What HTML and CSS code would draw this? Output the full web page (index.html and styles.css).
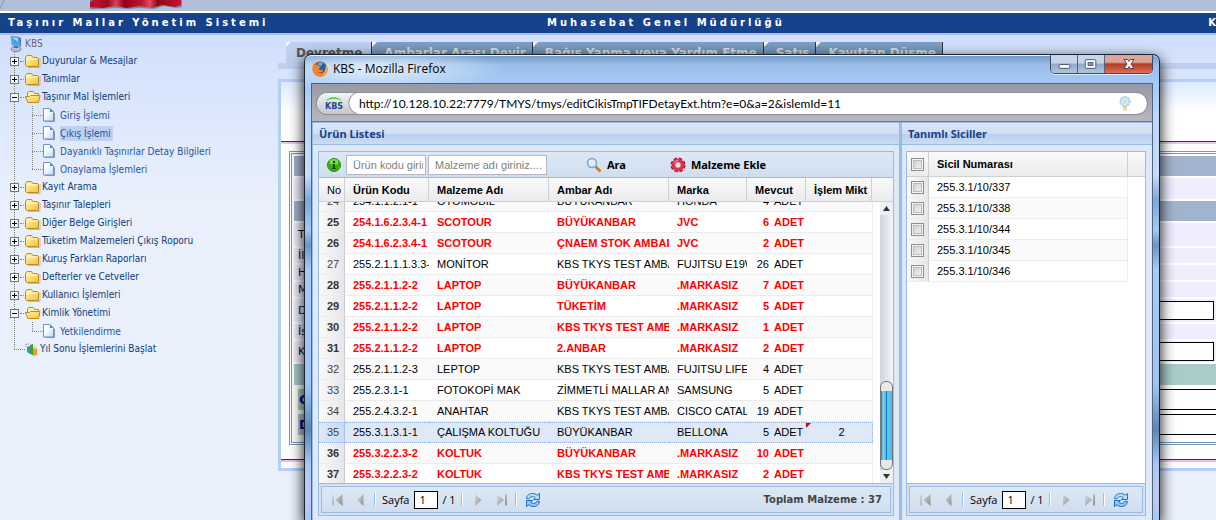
FILE: index.html
```html
<!DOCTYPE html>
<html lang="tr">
<head>
<meta charset="utf-8">
<title>Taşınır Mallar Yönetim Sistemi</title>
<link rel="stylesheet" href="styles.css">
</head>
<body>
<svg class="defs" aria-hidden="true">
  <defs>
    <linearGradient id="gold" x1="0" y1="0" x2="1" y2="1"><stop offset="0" stop-color="#fff8b0"/><stop offset="1" stop-color="#f3bf3c"/></linearGradient>
    <linearGradient id="paper" x1="0" y1="0" x2="1" y2="1"><stop offset="0.3" stop-color="#fff"/><stop offset="1" stop-color="#bcd8f8"/></linearGradient>
    <linearGradient id="grey" x1="0" y1="0" x2="1" y2="1"><stop offset="0" stop-color="#dcdcdc"/><stop offset="1" stop-color="#8c8c8c"/></linearGradient>
    <linearGradient id="flag" x1="0" x2="1"><stop offset="0" stop-color="#7c0617"/><stop offset=".12" stop-color="#c0112d"/><stop offset=".25" stop-color="#a00a20"/><stop offset=".34" stop-color="#df3d55"/><stop offset=".42" stop-color="#8b0619"/><stop offset=".6" stop-color="#c3142f"/><stop offset=".68" stop-color="#e04c60"/><stop offset=".76" stop-color="#8e081b"/><stop offset="1" stop-color="#c61431"/></linearGradient>
    <symbol id="folder" viewBox="0 0 16 14"><path d="M3 13.5h12V4" fill="none" stroke="#9a8a60" opacity=".5"/><path d="M.5 11.500V3.500L2 1.500h4.500L8 3.500h4.500l1 1v8H1.500z" fill="url(#gold)" stroke="#c08a1c"/><path d="M1.500 5h11" stroke="#fffbd8"/></symbol>
    <symbol id="folder-open" viewBox="0 0 16 14"><path d="M2.500 12V2.500L4 1.500h4l1.500 2h4V7" fill="#fff1a8" stroke="#c08a1c"/><path d="M.5 6.500h4l1-1h9.500l-1.500 7H3z" fill="url(#gold)" stroke="#c08a1c"/></symbol>
    <symbol id="page" viewBox="0 0 12 14"><path d="M2 13.500h9.500V5" fill="none" stroke="#8795ad"/><path d="M.5 .5h6.500l3.500 3.500v9H.5z" fill="url(#paper)" stroke="#6d93cf"/><path d="M7 .5v3.500h3.500z" fill="#5680c8"/></symbol>
    <symbol id="first" viewBox="0 0 12 12"><path d="M0 .5h2v11H0zM10.500 0v12L3.500 6z" fill="url(#grey)"/></symbol>
    <symbol id="prev" viewBox="0 0 12 12"><path d="M7.500 0v12L1 6z" fill="url(#grey)"/></symbol>
    <symbol id="next" viewBox="0 0 12 12"><path d="M2 0v12l6.500-6z" fill="url(#grey)"/></symbol>
    <symbol id="last" viewBox="0 0 12 12"><path d="M8 .5h2v11H8zM0 0v12l7-6z" fill="url(#grey)"/></symbol>
    <symbol id="refresh" viewBox="0 0 16 16"><path d="M1.500 6.500C2 3 4.500 1.500 7.500 1.500c2 0 3.500.7 4.500 1.800L14.500 1.500V7.500H8.500l1.800-1.800C8.500 4 5 4.200 3.800 7z" fill="#b5defd" stroke="#2476c8"/><path d="M14.500 9.500c-.5 3.500-3 5-6 5-2 0-3.500-.7-4.500-1.800L1.500 14.500V8.500h6l-1.800 1.800C7.500 12 11 11.800 12.200 9z" fill="#8cc8f8" stroke="#1f6abf"/></symbol>
  </defs>
</svg>

<div class="banner">
  <svg class="banner-edge" viewBox="0 0 6 11"><path d="M0 0h5L1 9H0z" fill="#8fa8d2"/><path d="M0 0h3L0 7z" fill="#b1c0d8"/></svg>
  <svg class="banner-flag" viewBox="0 0 94 11"><path d="M0 0h92v7l-6 1-12-2-10 3-14-1-12 1-12-1-14 1H0z" fill="#66728a" opacity=".7"/><path d="M3 0h88v5l-6 2-13-2-10 3-12-2-13 2-12-2-12 2-20-1z" fill="url(#flag)"/></svg>
</div>
<header class="masthead">
  <span>Taşınır Mallar Yönetim Sistemi</span>
  <span>Muhasebat Genel Müdürlüğü</span>
  <span class="masthead-user">K</span>
</header>

<div class="page">
  <nav class="tree">
    <div class="tree-root">
      <svg class="tree-pc" viewBox="0 0 13 17"><path d="M2 1l8 1 1 9-8-1z" fill="#38a9ec" stroke="#8fa3c4"/><path d="M3.500 2.500l5 .5.500 4z" fill="#a6e2ff"/><path d="M10 2l2 1v9l-1-1z" fill="#5a6c9c"/><ellipse cx="7" cy="14" rx="5" ry="2.500" fill="#b8c0d8" stroke="#7784a8"/><path d="M5 11h4v2H5z" fill="#5c6a94"/></svg>
      <span>KBS</span>
    </div>
    <ul class="tree-list">
      <li><a href="#"><i class="knob plus"></i><svg class="folder"><use href="#folder"/></svg>Duyurular &amp; Mesajlar</a></li>
      <li><a href="#"><i class="knob plus"></i><svg class="folder"><use href="#folder"/></svg>Tanımlar</a></li>
      <li><a href="#"><i class="knob"></i><svg class="folder"><use href="#folder-open"/></svg>Taşınır Mal İşlemleri</a>
        <ul>
          <li><a href="#"><svg class="leaf"><use href="#page"/></svg><span>Giriş İşlemi</span></a></li>
          <li><a href="#"><svg class="leaf"><use href="#page"/></svg><span class="current">Çıkış İşlemi</span></a></li>
          <li><a href="#"><svg class="leaf"><use href="#page"/></svg><span>Dayanıklı Taşınırlar Detay Bilgileri</span></a></li>
          <li><a href="#"><svg class="leaf"><use href="#page"/></svg><span>Onaylama İşlemleri</span></a></li>
        </ul>
      </li>
      <li><a href="#"><i class="knob plus"></i><svg class="folder"><use href="#folder"/></svg>Kayıt Arama</a></li>
      <li><a href="#"><i class="knob plus"></i><svg class="folder"><use href="#folder"/></svg>Taşınır Talepleri</a></li>
      <li><a href="#"><i class="knob plus"></i><svg class="folder"><use href="#folder"/></svg>Diğer Belge Girişleri</a></li>
      <li><a href="#"><i class="knob plus"></i><svg class="folder"><use href="#folder"/></svg>Tüketim Malzemeleri Çıkış Roporu</a></li>
      <li><a href="#"><i class="knob plus"></i><svg class="folder"><use href="#folder"/></svg>Kuruş Farkları Raporları</a></li>
      <li><a href="#"><i class="knob plus"></i><svg class="folder"><use href="#folder"/></svg>Defterler ve Cetveller</a></li>
      <li><a href="#"><i class="knob plus"></i><svg class="folder"><use href="#folder"/></svg>Kullanıcı İşlemleri</a></li>
      <li><a href="#"><i class="knob"></i><svg class="folder"><use href="#folder-open"/></svg>Kimlik Yönetimi</a>
        <ul>
          <li><a href="#"><svg class="leaf"><use href="#page"/></svg><span>Yetkilendirme</span></a></li>
        </ul>
      </li>
      <li class="tree-end"><a href="#"><i class="elbow"></i><svg class="chart" viewBox="0 0 13 13"><path d="M1 1h3M1 1v3" stroke="#888" stroke-dasharray="1 1"/><path d="M2 4l3-1v8l-3-2z" fill="#3b8de0"/><path d="M5 2l3-1v11l-3-1z" fill="#35a535"/><path d="M8 5l4 1v6l-4 1z" fill="#f39a1c"/><path d="M8 5l1-2 3 1v2z" fill="#ffd36b"/></svg>Yıl Sonu İşlemlerini Başlat</a></li>
    </ul>
  </nav>

  <main class="work">
    <div class="tabs">
      <button class="tab active">Devretme</button>
      <button class="tab">Ambarlar Arası Devir</button>
      <button class="tab">Bağış Yapma veya Yardım Etme</button>
      <button class="tab">Satış</button>
      <button class="tab">Kayıttan Düşme</button>
    </div>
    <div class="card">
      <div class="card-top"></div>
      <form class="fieldset">
        <div class="row head"></div>
        <div class="row h21"></div>
        <div class="row head"></div>
        <div class="row h23">T</div>
        <div class="row">İl</div>
        <div class="row">H</div>
        <div class="row">M</div>
        <label class="row h23"><span>D</span><input type="text"></label>
        <div class="row">İs</div>
        <label class="row h21"><span>K</span><input type="text"></label>
        <div class="row teal"></div>
        <label class="row wide"><b>G</b><input type="text"></label>
        <label class="row wide"><b>D</b><input type="text"></label>
      </form>
      <div class="card-bottom"></div>
    </div>
  </main>
</div>

<section class="window" aria-label="KBS - Mozilla Firefox">
  <div class="titlebar">
    <svg class="fox" viewBox="0 0 16 16"><circle cx="8" cy="8" r="7.500" fill="#d9541a"/><circle cx="8.500" cy="6.500" r="5.500" fill="#2c5c9e"/><path d="M6 2c2-1 4-.5 5 .5L9 5 6.500 4z" fill="#69b2e6"/><path d="M.7 5L1.500 2l2 2C5 3 6 4 7 5l2 1-2 1.500C7 9 9 10 11.500 8.500 11 12 7 12.500 5 10c1 3 7 4 9-1l.5-5C17 9 15 16 8 15.800 2 15.500 0 10 .7 5z" fill="#f0872a"/><path d="M14 4c1.500 4 .5 8-3 10.500 2-3 2.500-6 3-10.500z" fill="#ffd23c"/></svg>
    <span class="title">KBS - Mozilla Firefox</span>
    <div class="controls">
      <button aria-label="Küçült"><svg viewBox="0 0 27 18"><rect x="8.500" y="9.500" width="11" height="4" rx="1" fill="#fff" stroke="#4a5468"/></svg></button>
      <button aria-label="Ekranı kapla"><svg viewBox="0 0 27 18"><rect x="7.500" y="4.500" width="11" height="9" rx="1" fill="#fff" stroke="#4a5468"/><rect x="10.500" y="7.500" width="5" height="3" fill="#8ba5c9" stroke="#4a5468"/></svg></button>
      <button class="close" aria-label="Kapat"><svg viewBox="0 0 47 18"><path d="M19 4.500h3.500l1.500 2 1.500-2H29L26 9l3 4.500h-3.500l-1.500-2-1.500 2H19L22 9z" fill="#fff" stroke="#53434e"/></svg></button>
    </div>
  </div>
  <div class="client">
    <div class="urlbar">
      <div class="pill">
        <div class="site"><svg viewBox="0 0 18 15"><path d="M1 5C4 0 13 0 17 5 12 2 6 2 1 5z" fill="#35d01c"/><text x="9" y="13" text-anchor="middle">KBS</text></svg></div>
        <input type="text" aria-label="Adres" value="http://10.128.10.22:7779/TMYS/tmys/editCikisTmpTIFDetayExt.htm?e=0&amp;a=2&amp;islemId=11">
        <svg class="badge" viewBox="0 0 12 16"><path d="M4 9l4 1v5l-2-1-2 1z" fill="#f3dc85"/><circle cx="6" cy="5.500" r="4.500" fill="#e7f0f8" stroke="#a9cdec" stroke-width="2" stroke-dasharray="2 .6"/><circle cx="6" cy="5.500" r="2.500" fill="#cfdfeb"/></svg>
      </div>
    </div>
    <div class="panes">
      <section class="pane products">
        <h2>Ürün Listesi</h2>
        <div class="grid">
          <div class="toolbar">
            <svg class="info" viewBox="0 0 14 14"><circle cx="7" cy="7" r="6.500" fill="#36b307" stroke="#2b8a08"/><ellipse cx="7" cy="4" rx="4.500" ry="3" fill="#9be86a" opacity=".7"/><path d="M5.500 6H8v4h1v1H5v-1h1V7h-.5zM6 3h2v2H6z" fill="#0c4a05"/></svg>
            <input class="code" type="text" aria-label="Ürün kodu" placeholder="Ürün kodu giriniz....">
            <input class="name" type="text" aria-label="Malzeme adı" placeholder="Malzeme adı giriniz....">
            <button class="search"><svg viewBox="0 0 16 16"><path d="M9.500 9.500l5 5" stroke="#c87b2c" stroke-width="2.500"/><circle cx="6" cy="6" r="4.500" fill="#d4ecff" stroke="#7ba4d4" stroke-width="1.500"/><path d="M3.500 6a2.500 2.500 0 0 1 3-2.500" stroke="#fff" fill="none"/></svg>Ara</button>
            <button class="add"><svg viewBox="0 0 16 16"><circle cx="8" cy="8" r="6.300" fill="none" stroke="#b8152a" stroke-width="2.400" stroke-dasharray="3.300 1.650"/><circle cx="8" cy="8" r="4.500" fill="none" stroke="#de3347" stroke-width="3.600"/><path d="M4 6a4.500 4.500 0 0 1 4-2.500" stroke="#f39aa4" fill="none"/></svg>Malzeme Ekle</button>
          </div>
          <table class="list list-head">
            <colgroup><col class="c-no"><col class="c-code"><col class="c-name"><col class="c-store"><col class="c-brand"><col class="c-stock"><col class="c-qty"><col></colgroup>
            <thead><tr><th>No</th><th>Ürün Kodu</th><th>Malzeme Adı</th><th>Ambar Adı</th><th>Marka</th><th>Mevcut</th><th>İşlem Mikt</th><th></th></tr></thead>
          </table>
          <div class="scroller">
            <div class="viewport">
              <table class="list list-body">
                <colgroup><col class="c-no"><col class="c-code"><col class="c-name"><col class="c-store"><col class="c-brand"><col class="c-stock"><col></colgroup>
                <tbody>
                  <tr><td>24</td><td>254.1.1.2.1-1</td><td>OTOMOBİL</td><td>BÜYÜKANBAR</td><td>HONDA</td><td><span>4</span>ADET</td><td></td></tr>
                  <tr class="low"><td>25</td><td>254.1.6.2.3.4-1</td><td>SCOTOUR</td><td>BÜYÜKANBAR</td><td>JVC</td><td><span>6</span>ADET</td><td></td></tr>
                  <tr class="low"><td>26</td><td>254.1.6.2.3.4-1</td><td>SCOTOUR</td><td>ÇNAEM STOK AMBARI</td><td>JVC</td><td><span>2</span>ADET</td><td></td></tr>
                  <tr><td>27</td><td>255.2.1.1.1.3.3-1</td><td>MONİTOR</td><td>KBS TKYS TEST AMBARI</td><td>FUJITSU E19W</td><td><span>26</span>ADET</td><td></td></tr>
                  <tr class="low"><td>28</td><td>255.2.1.1.2-2</td><td>LAPTOP</td><td>BÜYÜKANBAR</td><td>.MARKASIZ</td><td><span>7</span>ADET</td><td></td></tr>
                  <tr class="low"><td>29</td><td>255.2.1.1.2-2</td><td>LAPTOP</td><td>TÜKETİM</td><td>.MARKASIZ</td><td><span>5</span>ADET</td><td></td></tr>
                  <tr class="low"><td>30</td><td>255.2.1.1.2-2</td><td>LAPTOP</td><td>KBS TKYS TEST AMBARI</td><td>.MARKASIZ</td><td><span>1</span>ADET</td><td></td></tr>
                  <tr class="low"><td>31</td><td>255.2.1.1.2-2</td><td>LAPTOP</td><td>2.ANBAR</td><td>.MARKASIZ</td><td><span>2</span>ADET</td><td></td></tr>
                  <tr><td>32</td><td>255.2.1.1.2-3</td><td>LEPTOP</td><td>KBS TKYS TEST AMBARI</td><td>FUJITSU LIFEBOOK</td><td><span>4</span>ADET</td><td></td></tr>
                  <tr><td>33</td><td>255.2.3.1-1</td><td>FOTOKOPİ MAK</td><td>ZİMMETLİ MALLAR AMBARI</td><td>SAMSUNG</td><td><span>5</span>ADET</td><td></td></tr>
                  <tr><td>34</td><td>255.2.4.3.2-1</td><td>ANAHTAR</td><td>KBS TKYS TEST AMBARI</td><td>CISCO CATALYST</td><td><span>19</span>ADET</td><td></td></tr>
                  <tr class="selected"><td>35</td><td>255.3.1.3.1-1</td><td>ÇALIŞMA KOLTUĞU</td><td>BÜYÜKANBAR</td><td>BELLONA</td><td><span>5</span>ADET</td><td class="dirty">2</td></tr>
                  <tr class="low"><td>36</td><td>255.3.2.2.3-2</td><td>KOLTUK</td><td>BÜYÜKANBAR</td><td>.MARKASIZ</td><td><span>10</span>ADET</td><td></td></tr>
                  <tr class="low"><td>37</td><td>255.3.2.2.3-2</td><td>KOLTUK</td><td>KBS TKYS TEST AMBARI</td><td>.MARKASIZ</td><td><span>2</span>ADET</td><td></td></tr>
                </tbody>
              </table>
            </div>
            <div class="scrollbar">
              <svg class="arrow" viewBox="0 0 13 13"><path d="M6.500 4l3.500 5H3z" fill="#333"/></svg>
              <div class="thumb"></div>
              <svg class="arrow" viewBox="0 0 13 13"><path d="M6.500 9l3.500-5H3z" fill="#333"/></svg>
            </div>
          </div>
          <div class="pager-wrap">
            <div class="pager">
              <button aria-label="İlk sayfa"><svg><use href="#first"/></svg></button>
              <button aria-label="Önceki sayfa"><svg><use href="#prev"/></svg></button>
              <i></i>
              <label>Sayfa <input type="text" value="1"></label><span>/ 1</span>
              <i></i>
              <button aria-label="Sonraki sayfa"><svg><use href="#next"/></svg></button>
              <button aria-label="Son sayfa"><svg><use href="#last"/></svg></button>
              <i></i>
              <button class="reload" aria-label="Yenile"><svg><use href="#refresh"/></svg></button>
              <strong>Toplam Malzeme : 37</strong>
            </div>
          </div>
        </div>
      </section>
      <section class="pane serials">
        <h2>Tanımlı Siciller</h2>
        <div class="grid">
          <table class="checks">
            <colgroup><col class="c-check"><col><col class="c-rest"></colgroup>
            <thead><tr><th><input type="checkbox" aria-label="Tümünü seç"></th><th>Sicil Numarası</th><th></th></tr></thead>
            <tbody>
              <tr><td><input type="checkbox" id="s1"></td><td><label for="s1">255.3.1/10/337</label></td></tr>
              <tr><td><input type="checkbox" id="s2"></td><td><label for="s2">255.3.1/10/338</label></td></tr>
              <tr><td><input type="checkbox" id="s3"></td><td><label for="s3">255.3.1/10/344</label></td></tr>
              <tr><td><input type="checkbox" id="s4"></td><td><label for="s4">255.3.1/10/345</label></td></tr>
              <tr><td><input type="checkbox" id="s5"></td><td><label for="s5">255.3.1/10/346</label></td></tr>
            </tbody>
          </table>
          <div class="pager-wrap">
            <div class="pager">
              <button aria-label="İlk sayfa"><svg><use href="#first"/></svg></button>
              <button aria-label="Önceki sayfa"><svg><use href="#prev"/></svg></button>
              <i></i>
              <label>Sayfa <input type="text" value="1"></label><span>/ 1</span>
              <i></i>
              <button aria-label="Sonraki sayfa"><svg><use href="#next"/></svg></button>
              <button aria-label="Son sayfa"><svg><use href="#last"/></svg></button>
              <i></i>
              <button class="reload" aria-label="Yenile"><svg><use href="#refresh"/></svg></button>
            </div>
          </div>
        </div>
      </section>
    </div>
  </div>
</section>
</body>
</html>
```
FILE: styles.css
```css
* { box-sizing: border-box; }
html, body { height: 100%; }
body {
  margin: 0;
  display: flex;
  flex-direction: column;
  position: relative;
  overflow: hidden;
  font: 11px/18px "Open Sans", "Noto Sans", sans-serif;
  color: #111;
  background: #e8effc;
}
button { border: 0; padding: 0; background: none; font: inherit; color: inherit; }
input { font: inherit; margin: 0; border-radius: 0; outline: 0; }
svg { display: block; flex: none; }
ul { list-style: none; margin: 0; padding: 0; }
a { color: inherit; text-decoration: none; }
table { border-collapse: separate; border-spacing: 0; table-layout: fixed; }
.defs { position: absolute; width: 0; height: 0; }

/* banner */
.banner { height: 11px; background: #b1c0d8; display: flex; }
.banner-edge { width: 6px; height: 11px; }
.banner-flag { width: 94px; height: 11px; margin-left: 84px; }
.masthead {
  display: grid;
  grid-template-columns: 5fr auto 4fr;
  align-items: center;
  height: 24px;
  padding-left: 8px;
  border-top: 2px solid #fff;
  border-bottom: 2px solid #aebfdf;
  background: #15428b;
  color: #fff;
  font: bold 10px/20px "DejaVu Sans", sans-serif;
  letter-spacing: 3px;
}
.masthead-user { text-align: right; letter-spacing: 0; }

.page {
  flex: 1;
  display: flex;
  min-height: 0;
  background: linear-gradient(#d0dffc, #e9f0fc 160px, #eaf1fc);
}

/* tree */
.tree { width: 278px; flex: none; color: #15428b; font-family: "DejaVu Sans Condensed", "Open Sans", sans-serif; font-size: 10px; }
.tree-root { display: flex; align-items: center; gap: 3px; height: 17px; padding-left: 9px; color: #666; }
.tree-pc { width: 13px; height: 17px; }
.tree-list { padding-left: 10px; }
.tree-list > li {
  background: repeating-linear-gradient(#777 0 1px, transparent 1px 2px) 4px 0 / 1px 100% no-repeat;
}
.tree-list > .tree-end { background-size: 1px 9px; }
.tree-list a { display: flex; align-items: center; height: 18px; }
.tree-list > li > a { color: #0d3b77; }
.knob {
  position: relative;
  width: 9px;
  height: 9px;
  margin-right: 6px;
  border: 1px solid #777;
  background: linear-gradient(#000, #000) 1px 3px / 5px 1px no-repeat #f3f7ff;
}
.plus { background: linear-gradient(#000, #000) 1px 3px / 5px 1px no-repeat, linear-gradient(#000, #000) 3px 1px / 1px 5px no-repeat #f3f7ff; }
.knob::after {
  content: "";
  position: absolute;
  left: 9px;
  top: 3px;
  width: 6px;
  border-top: 1px dotted #888;
}
.folder { width: 16px; height: 14px; margin-right: 1px; }
.elbow { width: 11px; margin-left: 4px; border-top: 1px dotted #888; }
.chart { width: 13px; height: 13px; margin-right: 2px; }
.tree-list ul {
  margin-left: 22px;
  background: repeating-linear-gradient(#888 0 1px, transparent 1px 2px) 0 0 / 1px calc(100% - 9px) no-repeat;
}
.tree-list ul a { background: repeating-linear-gradient(90deg, #888 0 1px, transparent 1px 2px) 0 9px / 11px 1px no-repeat; padding-left: 11px; color: #2553a0; }
.leaf { width: 12px; height: 14px; margin-right: 5px; }
.tree-list ul span { line-height: 15px; padding-right: 2px; }
.current { background: #bfd1f0; }

/* work area */
.work { flex: 1; min-width: 0; padding-top: 7px; }
.tabs {
  display: flex;
  height: 27px;
  padding-left: 8px;
  background: linear-gradient(#bed0ee, #bed0ee) 0 21px / 100% 6px no-repeat;
}
.tab {
  position: relative;
  display: flex;
  align-items: flex-start;
  padding: 0 6px 0 12px;
  border-right: 1px solid #333;
  background: linear-gradient(#7fa0c0, #6288b0);
  color: #dcdcdc;
  font: bold 12px/22px "DejaVu Sans", sans-serif;
  white-space: nowrap;
}
.tab::before {
  content: "";
  position: absolute;
  left: 0;
  top: 0;
  border-top: 5px solid #f4f7ff;
  border-right: 5px solid transparent;
}
.active { background: #bed0ee; color: #555; padding: 0 9px 0 10px; }
.card {
  margin-top: 10px;
  border: 3px solid #b3cff8;
  border-right: 0;
  background: linear-gradient(#dcebff, #fff 30px);
}
.card-top { height: 60px; border-bottom: 1px solid #850085; box-shadow: 0 2px #e8c6f0; margin-bottom: 9px; }
.card-bottom { height: 9px; border-top: 1px solid #850085; box-shadow: inset 0 2px #f3b6f0; margin-top: 14px; }
.fieldset {
  margin-left: 8px;
  padding: 2px 0 3px 2px;
  border: 3px double #7895b8;
  border-right: 0;
}
.row {
  display: flex;
  align-items: center;
  height: 15px;
  margin-bottom: 2px;
  padding-left: 4px;
  background: #eeeeff;
  font: 11px/15px "DejaVu Sans", sans-serif;
}
.row.head { height: 20px; background: #a2b3cd; }
.row.h21 { height: 21px; }
.row.h23 { height: 23px; }
.row.teal { height: 21px; background: #a9cbca; }
.row.wide { height: 21px; margin: 4px 0 4px 4px; padding-left: 1px; background: #a9cbca; }
.row b { color: #0a0a8c; font-size: 13px; }
.row input { width: 0; flex: 1; height: 19px; margin: 0 2px 0 8px; border: 1px solid #000; background: #fff; }
.row.wide input { margin-right: 0; border-right: 0; height: 21px; }

/* popup window */
.window {
  position: absolute;
  left: 304px;
  right: 56px;
  top: 54px;
  bottom: 0;
  display: flex;
  flex-direction: column;
  padding: 0 6px;
  border: 1px solid #1c2430;
  border-bottom: 0;
  border-radius: 7px 7px 0 0;
  background:
    radial-gradient(130px 22px at 70px 14px, rgba(235, 245, 255, .9), transparent),
    linear-gradient(#6f97c2, #9bbfea 10px, #a3c8f5 26px, #bcd8fb 60px, #c7dcfa 120px, #7da7d6 145px, #a5c8f2 175px, #6d95c4 190px, #a9cbf4 215px, #9fc4f0 330px, #5d86b8 375px, #a8caf4 410px, #c4c8f2 440px, #a8caf4);
  box-shadow: inset 0 1px #e8f3ff, 0 5px 14px 1px rgba(0, 0, 0, .85);
}
.titlebar { display: flex; height: 28px; }
.fox { width: 16px; height: 16px; margin: 6px 5px 0 1px; }
.title { flex: 1; font-size: 12px; line-height: 27px; color: #000; }
.controls {
  display: flex;
  height: 19px;
  border: 1px solid #3c4c66;
  border-top: 0;
  border-radius: 0 0 5px 5px;
  overflow: hidden;
  box-shadow: 0 1px #dcecff;
}
.controls button {
  width: 27px;
  border-right: 1px solid #53647c;
  background: linear-gradient(#c6d6ea 45%, #91aac9 50%, #adc6e4);
}
.controls svg { width: 100%; height: 18px; }
.controls .close { width: 47px; border-right: 0; background: linear-gradient(#dba59c 40%, #b83a22 50%, #d8705a); }
.client {
  flex: 1;
  min-height: 0;
  display: flex;
  flex-direction: column;
  border: solid #4d6584;
  border-width: 1px 1px 0;
}
.urlbar { padding: 9px 5px 7px; height: 38px; border-bottom: 1px solid #74757b; background: linear-gradient(#9699a6, #b8b9bf); }
.pill {
  display: flex;
  align-items: center;
  height: 21px;
  border-radius: 11px;
  background: #fff;
  overflow: hidden;
  box-shadow: 0 0 0 1px #8c8d93;
}
.site {
  width: 40px;
  align-self: stretch;
  padding: 3px 12px 0 8px;
  background: radial-gradient(circle at 43px 10px, #fff 10px, #999 11px, transparent 12px), linear-gradient(#f4f4f4, #c6c6c8);
}
.site svg { width: 18px; height: 15px; }
.site text { font: bold 8px "DejaVu Sans", sans-serif; fill: #224a94; }
.pill input { flex: 1; min-width: 0; border: 0; padding: 0 2px; background: none; font: 12px/20px Lato, "Open Sans", sans-serif; color: #000; }
.badge { width: 12px; height: 16px; margin-right: 16px; }

.panes { flex: 1; min-height: 0; display: flex; gap: 3px; background: #99bbe8; border-left: 1px solid #99bbe8; }
.pane { display: flex; flex-direction: column; min-width: 0; background: #dfe8f6; }
.products { flex: 1; }
.serials { width: 250px; flex: none; }
.pane h2 {
  margin: 0;
  height: 23px;
  padding-left: 6px;
  border: solid #99bbe8;
  border-width: 1px 0;
  background: linear-gradient(#dbe7f6, #cfdef3 50%, #b8cfee 52%, #cbdcf3);
  color: #15428b;
  font: bold 11px/21px "Noto Sans", "Open Sans", sans-serif;
}
.grid {
  flex: 1;
  min-height: 0;
  display: flex;
  flex-direction: column;
  margin: 6px 5px 4px;
  border: 1px solid #99bbe8;
  background: #fff;
}
.serials .grid { margin-left: 4px; margin-right: 6px; }
.toolbar {
  display: flex;
  align-items: center;
  height: 26px;
  padding-left: 8px;
  border-bottom: 1px solid #99bbe8;
  background: linear-gradient(#dde8f5, #cfdef0);
}
.info { width: 14px; height: 14px; margin-right: 5px; }
.toolbar input {
  height: 20px;
  margin-right: 2px;
  padding: 0 2px 0 6px;
  border: 1px solid #b5b8c8;
  background: #fff;
  font: 11px/18px "Liberation Sans", Arial, sans-serif;
}
.toolbar input::placeholder { color: #808080; }
.code { width: 80px; }
.name { width: 119px; }
.toolbar button { display: flex; align-items: center; gap: 5px; font: bold 11px/16px "Noto Sans", "Open Sans", sans-serif; color: #000; }
.toolbar button svg { width: 16px; height: 16px; }
.search { margin-left: 37px; }
.add { margin-left: 44px; }

.list { width: 100%; font: 11px/18px "Liberation Sans", Arial, sans-serif; }
.c-no { width: 26px; }
.c-code { width: 84px; }
.c-name, .c-store { width: 120px; }
.c-brand { width: 78px; }
.c-stock { width: 59px; }
.c-qty { width: 66px; }
.list th, .list td { overflow: hidden; white-space: nowrap; text-align: left; padding: 0 0 0 8px; }
.list th {
  height: 24px;
  border-right: 1px solid #d0d0d0;
  border-bottom: 1px solid #d0d0d0;
  background: linear-gradient(#fafafa, #ebebee);
  color: #000;
}
.list th:first-child { font-weight: normal; }
.list th:last-child { border-right: 0; }
.scroller { flex: 1; min-height: 0; display: flex; }
.viewport { flex: 1; min-width: 0; padding-right: 7px; overflow: hidden; }
.list-body { margin-top: -11px; }
.list td { height: 21px; border-bottom: 1px solid #ececec; color: #000; }
.list td:last-child { border-right: 1px solid #ececec; }
.list tr:nth-child(odd) td { background: #fafafa; }
.list tr td:first-child { background: linear-gradient(90deg, #fafafa, #e6e6ea); border-right: 1px solid #ccc; color: #444; }
.list .low td { color: #f00; font-weight: bold; }
.list .low td:first-child { color: #333; }
.list td span { display: inline-block; width: 14px; margin-right: 5px; text-align: right; }
.list .selected td { background: #dfe8f6; border: dotted #8fb0e0; border-width: 1px 0; line-height: 17px; }
.list .selected td:first-child { background: linear-gradient(90deg, #dfe8f6, #c8dcf6); border-right: 1px solid #a9c8ee; }
.list .selected td:last-child { border-right-width: 1px; }
.list .dirty { position: relative; padding: 0 0 0 5px; text-align: center; }
.dirty::before {
  content: "";
  position: absolute;
  left: 0;
  top: 0;
  border-top: 5px solid #c00;
  border-right: 5px solid transparent;
}
.scrollbar { width: 13px; display: flex; flex-direction: column; background: linear-gradient(90deg, #cfd3de, #f3f4f8); }
.arrow { width: 13px; height: 13px; background: #eef0f4; }
.thumb {
  height: 89px;
  margin-top: auto;
  border: 1px solid #777;
  border-radius: 6px;
  background:
    linear-gradient(#e8e8ea, #e8e8ea) 0 0 / 100% 9px no-repeat,
    linear-gradient(#e8e8ea, #e8e8ea) 0 100% / 100% 9px no-repeat,
    linear-gradient(90deg, #2a7fc0, #86d2ee 20%, #4db5e2 45%, #1c7bb8 50%, #5bcdf0 60%, #44b9e6);
}

.pager-wrap { height: 32px; margin-top: auto; padding: 2px; border-top: 1px solid #99bbe8; background: #d3e1f1; }
.pager {
  display: flex;
  align-items: center;
  height: 27px;
  padding-left: 10px;
  border: 1px solid #99bbe8;
  background: linear-gradient(#dde8f5, #cfdef0);
  font-size: 11px;
  color: #000;
  white-space: nowrap;
}
.pager svg { width: 12px; height: 12px; }
.pager button { margin-right: 12px; }
.pager button + i { margin-left: -6px; }
.pager i { flex: none; width: 2px; height: 13px; border-left: 1px solid #8fc0f5; border-right: 1px solid #fff; }
.pager label { display: flex; align-items: center; gap: 5px; margin-left: 6px; }
.pager input { width: 24px; height: 18px; padding: 0 4px; border: 1px solid #000; background: #fff; }
.pager span { margin: 0 5px 0 4px; }
.pager span + i { margin-right: 10px; }
.pager .reload { margin: 0 0 0 8px; }
.pager .reload svg { width: 16px; height: 16px; }
.pager strong { margin: 0 8px 0 auto; color: #444; font: bold 10px/18px "DejaVu Sans", sans-serif; }

.checks { width: 100%; font: 11px/18px "Liberation Sans", Arial, sans-serif; color: #000; }
.c-check { width: 22px; }
.c-rest { width: 17px; }
.checks th, .checks td { padding: 0 0 0 8px; text-align: left; }
.checks th { height: 25px; border-right: 1px solid #d0d0d0; border-bottom: 1px solid #d0d0d0; background: linear-gradient(#fafafa, #ebebee); }
.checks th:last-child { border-right: 0; }
.checks td { height: 21px; border: solid #ececec; border-width: 0 1px 1px 0; }
.checks tr:nth-child(even) td { background: #fafafa; }
.checks th:first-child, .checks tr td:first-child { padding: 0 0 0 4px; }
.checks tr td:first-child { background: linear-gradient(90deg, #fafafa, #e6e6ea); border-right-color: #ccc; }
.checks input {
  display: block;
  appearance: none;
  width: 13px;
  height: 13px;
  border: 1px solid #8e8f8f;
  background: linear-gradient(135deg, #c9cdd2, #f6f6f6);
  box-shadow: inset 0 0 0 1px #f4f4f4, inset 0 0 0 2px #bbb;
}
```
